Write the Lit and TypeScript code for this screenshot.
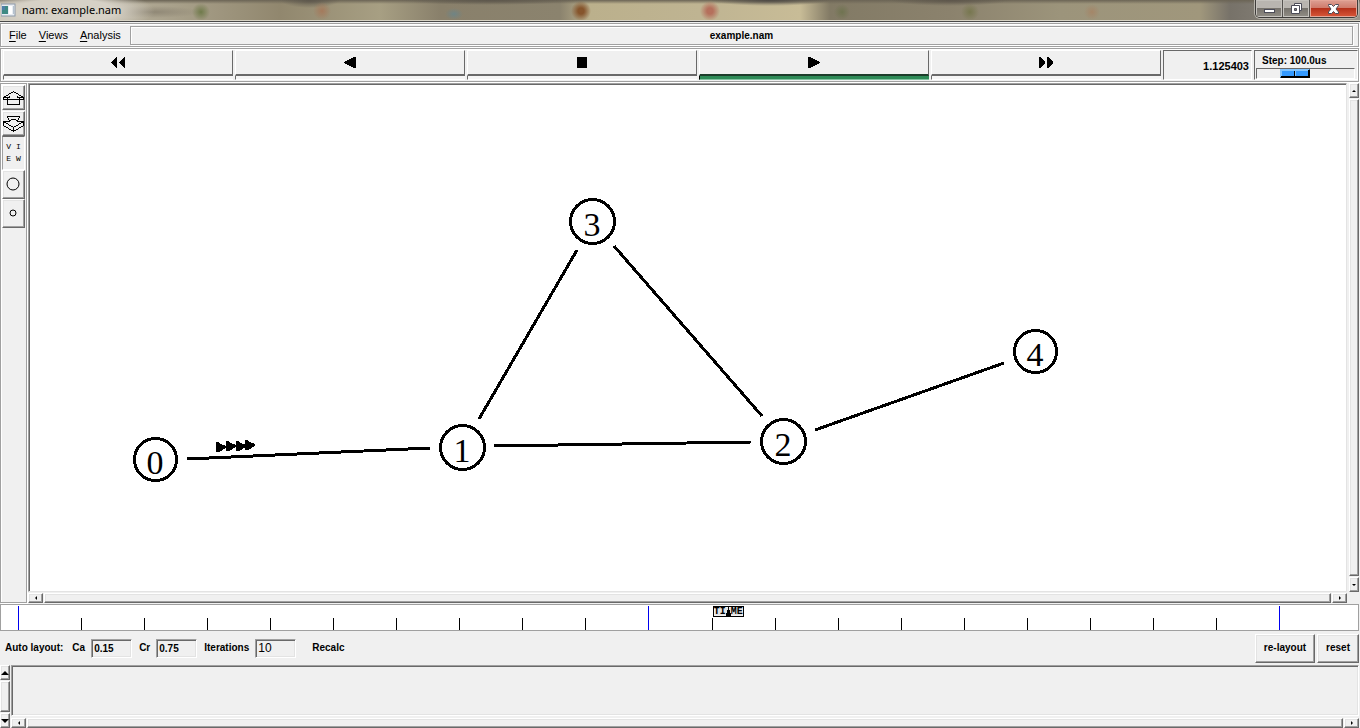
import { LitElement, html, css, svg } from "lit";
import { customElement, property, state } from "lit/decorators.js";
import { classMap } from "lit/directives/class-map.js";

const bevels = css`
  * { box-sizing: border-box; }
  button {
    font: inherit;
    color: #000;
    padding: 0;
    margin: 0;
    border-radius: 0;
    background: #f0f0f0;
    display: flex;
    align-items: center;
    justify-content: center;
  }
  .raised {
    border: 1px solid;
    border-color: #fff #696969 #696969 #fff;
    box-shadow: inset -1px -1px 0 #a0a0a0, inset 1px 1px 0 #e3e3e3;
  }
  .sunken {
    border: 1px solid;
    border-color: #a0a0a0 #fff #fff #a0a0a0;
    box-shadow: inset 1px 1px 0 #696969, inset -1px -1px 0 #e3e3e3;
  }
`;

@customElement("nam-scrollbar")
class NamScrollbar extends LitElement {
  @property({ type: Boolean, reflect: true }) vertical = false;
  @property({ type: Boolean, reflect: true }) wide = false;

  static styles = [bevels, css`
    :host { display: flex; height: 10px; gap: 1px; background: #f0f0f0; }
    :host([vertical]) { flex-direction: column; width: 10px; height: auto; }
    .arrow { flex: none; width: 15px; }
    :host([vertical]) .arrow { width: 100%; height: 15px; }
    .thumb { flex: 1; }
    svg { display: block; flex: none; }
  `];

  render() {
    const big = this.wide;
    const back = this.vertical
      ? (big ? "M0 6h8L4 2z" : "M2 5h4L4 3z")
      : "M5 2v4L3 4z";
    const forward = this.vertical
      ? (big ? "M0 2h8L4 6z" : "M2 3h4L4 5z")
      : "M3 2v4l2-2z";
    return html`
      <button class="arrow raised" aria-label="Scroll back"><svg width="8" height="8"><path d=${back} /></svg></button>
      <div class="thumb raised"></div>
      <button class="arrow raised" aria-label="Scroll forward"><svg width="8" height="8"><path d=${forward} /></svg></button>
    `;
  }
}

interface NetNode { id: number; x: number; y: number; r: number; }

const nodes: NetNode[] = [
  { id: 0, x: 155, y: 460, r: 21 },
  { id: 1, x: 462, y: 448, r: 22 },
  { id: 2, x: 783, y: 442, r: 22 },
  { id: 3, x: 592, y: 222, r: 22 },
  { id: 4, x: 1035, y: 352, r: 21 },
];

const links = [
  [187, 460, 430, 449],
  [494, 447, 751, 443],
  [479, 420, 577, 251],
  [614, 247, 762, 417],
  [815, 431, 1004, 364],
];

const packets = [[216, 448], [226, 447], [236, 447], [245, 446]];

@customElement("nam-network")
class NamNetwork extends LitElement {
  static styles = css`
    :host { display: flex; min-width: 0; min-height: 0; }
    svg { flex: 1; min-width: 0; width: 100%; height: 100%; }
    .link { stroke: #000; stroke-width: 3; shape-rendering: crispEdges; }
    .ring { fill: #fff; stroke: #000; stroke-width: 3; shape-rendering: crispEdges; }
    .label { font: 34px "Liberation Serif", serif; text-anchor: middle; }
  `;

  render() {
    return html`
      <svg viewBox="30 86 1316 506" role="img" aria-label="Network topology">
        ${links.map(([a, b, c, d]) => svg`<line class="link" x1=${a} y1=${b} x2=${c} y2=${d} />`)}
        ${packets.map(([x, y]) => svg`<path shape-rendering="crispEdges" transform="translate(${x} ${y})" d="M0-5H2L5-3 10-1V1L5 4 2 5H0z" />`)}
        ${nodes.map((n) => svg`
          <circle class="ring" cx=${n.x + 0.5} cy=${n.y + 0.5} r=${n.r} />
          <text class="label" x=${n.x} y=${n.y + 15}>${n.id}</text>
        `)}
      </svg>
    `;
  }
}

@customElement("nam-timeline")
class NamTimeline extends LitElement {
  @property({ type: Number }) position = 52.45;

  static styles = css`
    * { box-sizing: border-box; }
    :host { display: block; position: relative; }
    .scale {
      display: flex;
      align-items: flex-end;
      height: 27px;
      padding: 0 16px 0 17px;
      border: 1px solid #a0a0a0;
      background: #fff;
    }
    .tick { flex: 1; height: 12px; border-left: 1px solid #000; }
    .scale .major { height: 24px; border-left-color: #0000f0; }
    .marker {
      position: absolute;
      top: 2px;
      display: flex;
      align-items: center;
      justify-content: center;
      width: 31px;
      height: 11px;
      border: 1px solid #000;
      box-shadow: inset 0 0 0 1px #f0f0f0;
      background: #e3e3e3;
      font: bold 10px/9px "Liberation Mono", monospace;
    }
    .marker svg { flex: none; }
  `;

  render() {
    return html`
      <div class="scale">
        ${Array.from({ length: 21 }, (_, i) => html`
          <span class=${classMap({ tick: true, major: i % 10 === 0 })}></span>`)}
      </div>
      <div class="marker" style="left:${this.position}%">
        <span>TI</span><svg width="5" height="9"><path d="M2 0h1v3h1v3h1v3H0V6h1V3h1z" /></svg><span>ME</span>
      </div>
    `;
  }
}

const glyphs = {
  rewind: svg`<path d="M6 0v11h-1L0 6V5l5-5zM14 0v11h-1L8 6V5l5-5z" />`,
  back: svg`<path d="M13 0v11h-2L1 6V5l10-5z" />`,
  stop: svg`<path d="M2 0h10v11H2z" />`,
  play: svg`<path d="M1 0v11h2l10-5V5L3 0z" />`,
  forward: svg`<path d="M0 0v11h1l5-5V5L1 0zM8 0v11h1l5-5V5L9 0z" />`,
};

@customElement("app-root")
class AppRoot extends LitElement {
  @state() private active = "play";

  static styles = [bevels, css`
    :host {
      display: flex;
      flex-direction: column;
      min-height: 100vh;
      background: #f0f0f0;
      color: #000;
      font: bold 10px/12px "Liberation Sans", Arial, sans-serif;
    }
    .titlebar {
      display: flex;
      align-items: center;
      height: 22px;
      padding: 0 2px 1px 1px;
      border-bottom: 1px solid #484848;
      box-shadow: inset 0 -1px 0 #d6d2c4;
      background:
        radial-gradient(ellipse 90px 22px at 65px 11px, #d6d1c6 55%, transparent),
        radial-gradient(circle 9px at 201px 12px, #6f7a4a, transparent),
        radial-gradient(circle 9px at 322px 11px, #a47a5c, transparent),
        radial-gradient(ellipse 9px 6px at 454px 14px, #6f8485, transparent),
        radial-gradient(circle 10px at 581px 11px, #86552c 30%, transparent),
        radial-gradient(circle 10px at 710px 11px, #b5705c 30%, transparent),
        radial-gradient(circle 8px at 842px 12px, #6f7350, transparent),
        radial-gradient(circle 9px at 970px 12px, #77774f, transparent),
        radial-gradient(circle 8px at 1092px 12px, #a48668, transparent),
        radial-gradient(ellipse 50px 6px at 152px 12px, #8f8775, transparent),
        radial-gradient(ellipse 90px 5px at 490px 0, #5d574c, transparent),
        radial-gradient(ellipse 30px 8px at 310px 0, #5d574c, transparent),
        radial-gradient(ellipse 60px 6px at 770px 0, #4d4944, transparent),
        radial-gradient(ellipse 60px 6px at 950px 0, #5d564b, transparent),
        linear-gradient(#6b6455 0, transparent 4px),
        linear-gradient(90deg, #c9c3b5 0, #a79f89 180px, #91876e 280px, #a79f83 380px, #89806b 440px, #8b836e 560px, #bbb08c 590px, #bfb492 700px, #c8bc97 800px, #827a65 830px, #8b826d 950px, #9c947b 1060px, #a0977c 1200px, #777269 1230px, #9a958c 1360px);
    }
    .app-icon { flex: none; margin-right: 6px; }
    .title {
      flex: 1;
      margin: 0;
      font: 11px/16px "Noto Sans", "Open Sans", sans-serif;
    }
    .window-buttons {
      display: flex;
      align-self: flex-start;
      height: 18px;
      border: 1px solid #3e3c3a;
      border-top: 0;
      border-radius: 0 0 5px 5px;
      overflow: hidden;
      box-shadow: 0 0 0 1px #b8b4ac;
    }
    .window-buttons button {
      width: 27px;
      border: 0;
      border-right: 1px solid #55524f;
      background: linear-gradient(#b9b5b0 0 50%, #77736d 50%, #918d85);
      box-shadow: inset 0 0 0 1px #c5c2bd;
    }
    .window-buttons .close {
      width: 47px;
      border: 0;
      background: linear-gradient(#dda094, #ce7868 50%, #b5311b 50%, #d9583a);
      box-shadow: inset 0 0 0 1px #e4a597;
    }
    .groove {
      border: 1px solid #a0a0a0;
      box-shadow: inset 1px 1px 0 #fff, 1px 1px 0 #fff;
      margin: 1px 1px 0 0;
    }
    .menubar {
      display: flex;
      align-items: center;
      height: 24px;
      padding-right: 5px;
    }
    .menubar nav { display: flex; gap: 12px; padding: 0 9px 0 8px; }
    .menubar nav button {
      border: 0;
      font: 11px/14px "Liberation Sans", sans-serif;
    }
    .menubar u { text-underline-offset: 2px; }
    .filename {
      flex: 1;
      height: 19px;
      border: 1px solid #a0a0a0;
      box-shadow: inset 1px 1px 0 #fff, 1px 1px 0 #fff;
      line-height: 18px;
      text-align: center;
    }
    .toolbar { display: flex; gap: 2px; height: 34px; padding: 1px 0 1px 2px; }
    .transport { display: flex; flex: 1; gap: 2px; }
    .key { flex: 1; flex-direction: column; align-items: stretch; border: 0; }
    .face {
      display: flex;
      flex: none;
      align-items: center;
      justify-content: center;
      height: 26px;
      border: 1px solid #fff;
      border-right-color: #696969;
      border-bottom: 2px solid #696969;
    }
    .lamp { flex: none; height: 4px; border-left: 1px solid #696969; border-bottom: 1px solid #fff; background: #f5f5f5; }
    .on .face { border-bottom-color: #1c3d2a; }
    .on .lamp { background: #2e8b57; border-left-color: #000; border-bottom-color: #82c3a0; }
    .well { border: 1px solid; border-color: #696969 #fff #fff #696969; }
    .clock {
      width: 89px;
      padding-right: 2px;
      font-size: 11px;
      line-height: 30px;
      text-align: right;
      display: block;
    }
    .step { display: flex; flex-direction: column; gap: 1px; width: 104px; padding: 4px 2px 1px 1px; }
    .step label { padding-left: 6px; }
    .step input {
      appearance: none;
      width: 100%;
      height: 11px;
      margin: 0;
      border: 1px solid;
      border-color: #696969 #fff #fff #696969;
      background: #f0f0f0;
    }
    .step input::-webkit-slider-thumb {
      appearance: none;
      width: 30px;
      height: 9px;
      border: 1px solid;
      border-color: #80c4ff #000 #000 #80c4ff;
      background: linear-gradient(90deg, transparent 13px, #000 13px 14px, #80c4ff 14px 15px, transparent 15px), #3399ff;
      box-shadow: inset -1px -1px 0 #000, inset 1px 1px 0 #80c4ff;
    }
    .workspace { display: flex; flex: 1; padding-right: 1px; }
    .tools { width: 27px; padding: 0 1px; }
    .tools button { width: 23px; }
    .tools .zoom { height: 25px; margin-top: 1px; }
    .tools .view {
      height: 34px;
      border: 1px solid;
      border-color: #696969 #fff #fff #a0a0a0;
      font: 8px/12px "Liberation Mono", monospace;
      white-space: pre;
    }
    .tools .size { height: 29px; }
    .stage { display: grid; flex: 1; grid-template: minmax(0, 1fr) 10px / minmax(0, 1fr) 10px; gap: 1px 2px; padding-top: 1px; }
    .stage nam-network { border: 1px solid; border-color: #a0a0a0 #e3e3e3 #e3e3e3 #a0a0a0; box-shadow: inset 1px 1px 0 #696969; padding: 1px 0 0 1px; background: #fff; }
    nam-timeline { margin: 1px 1px 0 0; }
    .layout { display: flex; align-items: center; height: 34px; padding: 2px 1px 2px 5px; }
    .layout label { display: flex; align-items: center; gap: 6px; margin-right: 7px; }
    .layout .caption { margin-right: 9px; }
    .layout input {
      width: 41px;
      height: 19px;
      padding: 0 2px;
      border-radius: 0;
      background: #f0f0f0;
      color: #000;
      font: bold 10px/14px "Liberation Sans", Arial, sans-serif;
    }
    .layout .plain { font: 12px/16px "Liberation Sans", sans-serif; }
    .layout .recalc { border: 0; margin-left: 9px; }
    .layout .actions { display: flex; gap: 2px; margin-left: auto; }
    .layout .actions button { height: 29px; padding: 0 8px; }
    .log { display: flex; gap: 1px; height: 63px; padding-right: 1px; }
    .log-body { display: flex; flex: 1; flex-direction: column; gap: 2px; }
    .log-text { flex: 1; width: 100%; margin: 0; resize: none; border-radius: 0; background: #f0f0f0; min-height: 0; display: block; }
  `];

  private key(name: string, label: string) {
    return html`
      <button class=${classMap({ key: true, on: this.active === name })} aria-label=${label} @click=${() => (this.active = name)}>
        <span class="face"><svg width="14" height="11" shape-rendering="crispEdges">${glyphs[name as keyof typeof glyphs]}</svg></span>
        <span class="lamp"></span>
      </button>`;
  }

  render() {
    return html`
      <header class="titlebar">
        <svg class="app-icon" width="15" height="14">
          <rect x="0" y="1" width="14" height="12" fill="#e9edf2" stroke="#8b98a8" />
          <path d="M1 3h6v8H1z" fill="#3f8a83" />
          <path d="M1 3h3v4H1z" fill="#4d7fa8" />
          <path d="M8 3h3v8H8z" fill="#fff" /><path d="M12 3h1v8h-1z" fill="#b5c2cf" />
        </svg>
        <h1 class="title">nam: example.nam</h1>
        <div class="window-buttons">
          <button aria-label="Minimize"><svg width="13" height="12"><rect x="1.500" y="6.500" width="10" height="3" fill="#fff" stroke="#4c4c58" /></svg></button>
          <button aria-label="Restore"><svg width="13" height="13"><path d="M4.500 1.500h7v7h-7z" fill="#fff" stroke="#4c4c58" /><path d="M1.500 3.500h8v8h-8z" fill="#fff" stroke="#4c4c58" /><path d="M4.500 6.500h2v2h-2z" fill="#8a8780" stroke="#4c4c58" /></svg></button>
          <button class="close" aria-label="Close"><svg width="13" height="12"><path d="M1.500 1.500h3l2 2 2-2h3v1L9 6l2.500 3v1.500h-3l-2-2-2 2h-3V9L4 6 1.500 2.500z" fill="#fff" stroke="#4c4c58" /></svg></button>
        </div>
      </header>

      <div class="menubar groove">
        <nav>
          <button><span><u>F</u>ile</span></button>
          <button><span><u>V</u>iews</span></button>
          <button><span><u>A</u>nalysis</span></button>
        </nav>
        <div class="filename">example.nam</div>
      </div>

      <div class="toolbar groove">
        <div class="transport">
          ${this.key("rewind", "Rewind")}
          ${this.key("back", "Play backward")}
          ${this.key("stop", "Stop")}
          ${this.key("play", "Play forward")}
          ${this.key("forward", "Fast forward")}
        </div>
        <output class="clock well">1.125403</output>
        <div class="step well">
          <label for="step">Step: 100.0us</label>
          <input id="step" type="range" min="0" max="100" value="35" />
        </div>
      </div>

      <main class="workspace">
        <aside class="tools groove">
          <button class="zoom raised" aria-label="Zoom in">
            <svg width="21" height="18" fill="none" stroke="#000" shape-rendering="crispEdges">
              <path d="M10.500 2.500 .5 8.500v2h4v5h12v-5h4v-2zM4.500 10.500h12M4.500 8.500v2M16.500 8.500v2M.5 8.500h6v-2M20.500 8.500h-6v-2" />
            </svg>
          </button>
          <button class="zoom raised" aria-label="Zoom out">
            <svg width="21" height="18" fill="none" stroke="#000" shape-rendering="crispEdges">
              <path d="M4.500 1.500h12l-2 5h6v4l-10 6-10-6v-4h6zM.5 6.500l10 6 10-6M10.500 12.500v4M6.500 6.500l2-2h4l2 2" />
            </svg>
          </button>
          <button class="view"><span>V I
E W</span></button>
          <button class="size raised" aria-label="Larger nodes">
            <svg width="20" height="20" fill="none" stroke="#000"><circle cx="9" cy="9" r="6" /></svg>
          </button>
          <button class="size raised" aria-label="Smaller nodes">
            <svg width="20" height="20" fill="none" stroke="#000"><circle cx="9" cy="9" r="3" /></svg>
          </button>
        </aside>
        <div class="stage">
          <nam-network></nam-network>
          <nam-scrollbar vertical></nam-scrollbar>
          <nam-scrollbar></nam-scrollbar>
        </div>
      </main>

      <nam-timeline></nam-timeline>

      <form class="layout" @submit=${(e: Event) => e.preventDefault()}>
        <span class="caption">Auto layout:</span>
        <label>Ca <input class="sunken" value="0.15" /></label>
        <label>Cr <input class="sunken" value="0.75" /></label>
        <label>Iterations <input class="sunken plain" value="10" /></label>
        <button type="button" class="recalc">Recalc</button>
        <div class="actions">
          <button type="button" class="raised">re-layout</button>
          <button type="button" class="raised">reset</button>
        </div>
      </form>

      <section class="log">
        <nam-scrollbar vertical wide></nam-scrollbar>
        <div class="log-body">
          <textarea class="log-text sunken" aria-label="Annotations"></textarea>
          <nam-scrollbar></nam-scrollbar>
        </div>
      </section>
    `;
  }
}
